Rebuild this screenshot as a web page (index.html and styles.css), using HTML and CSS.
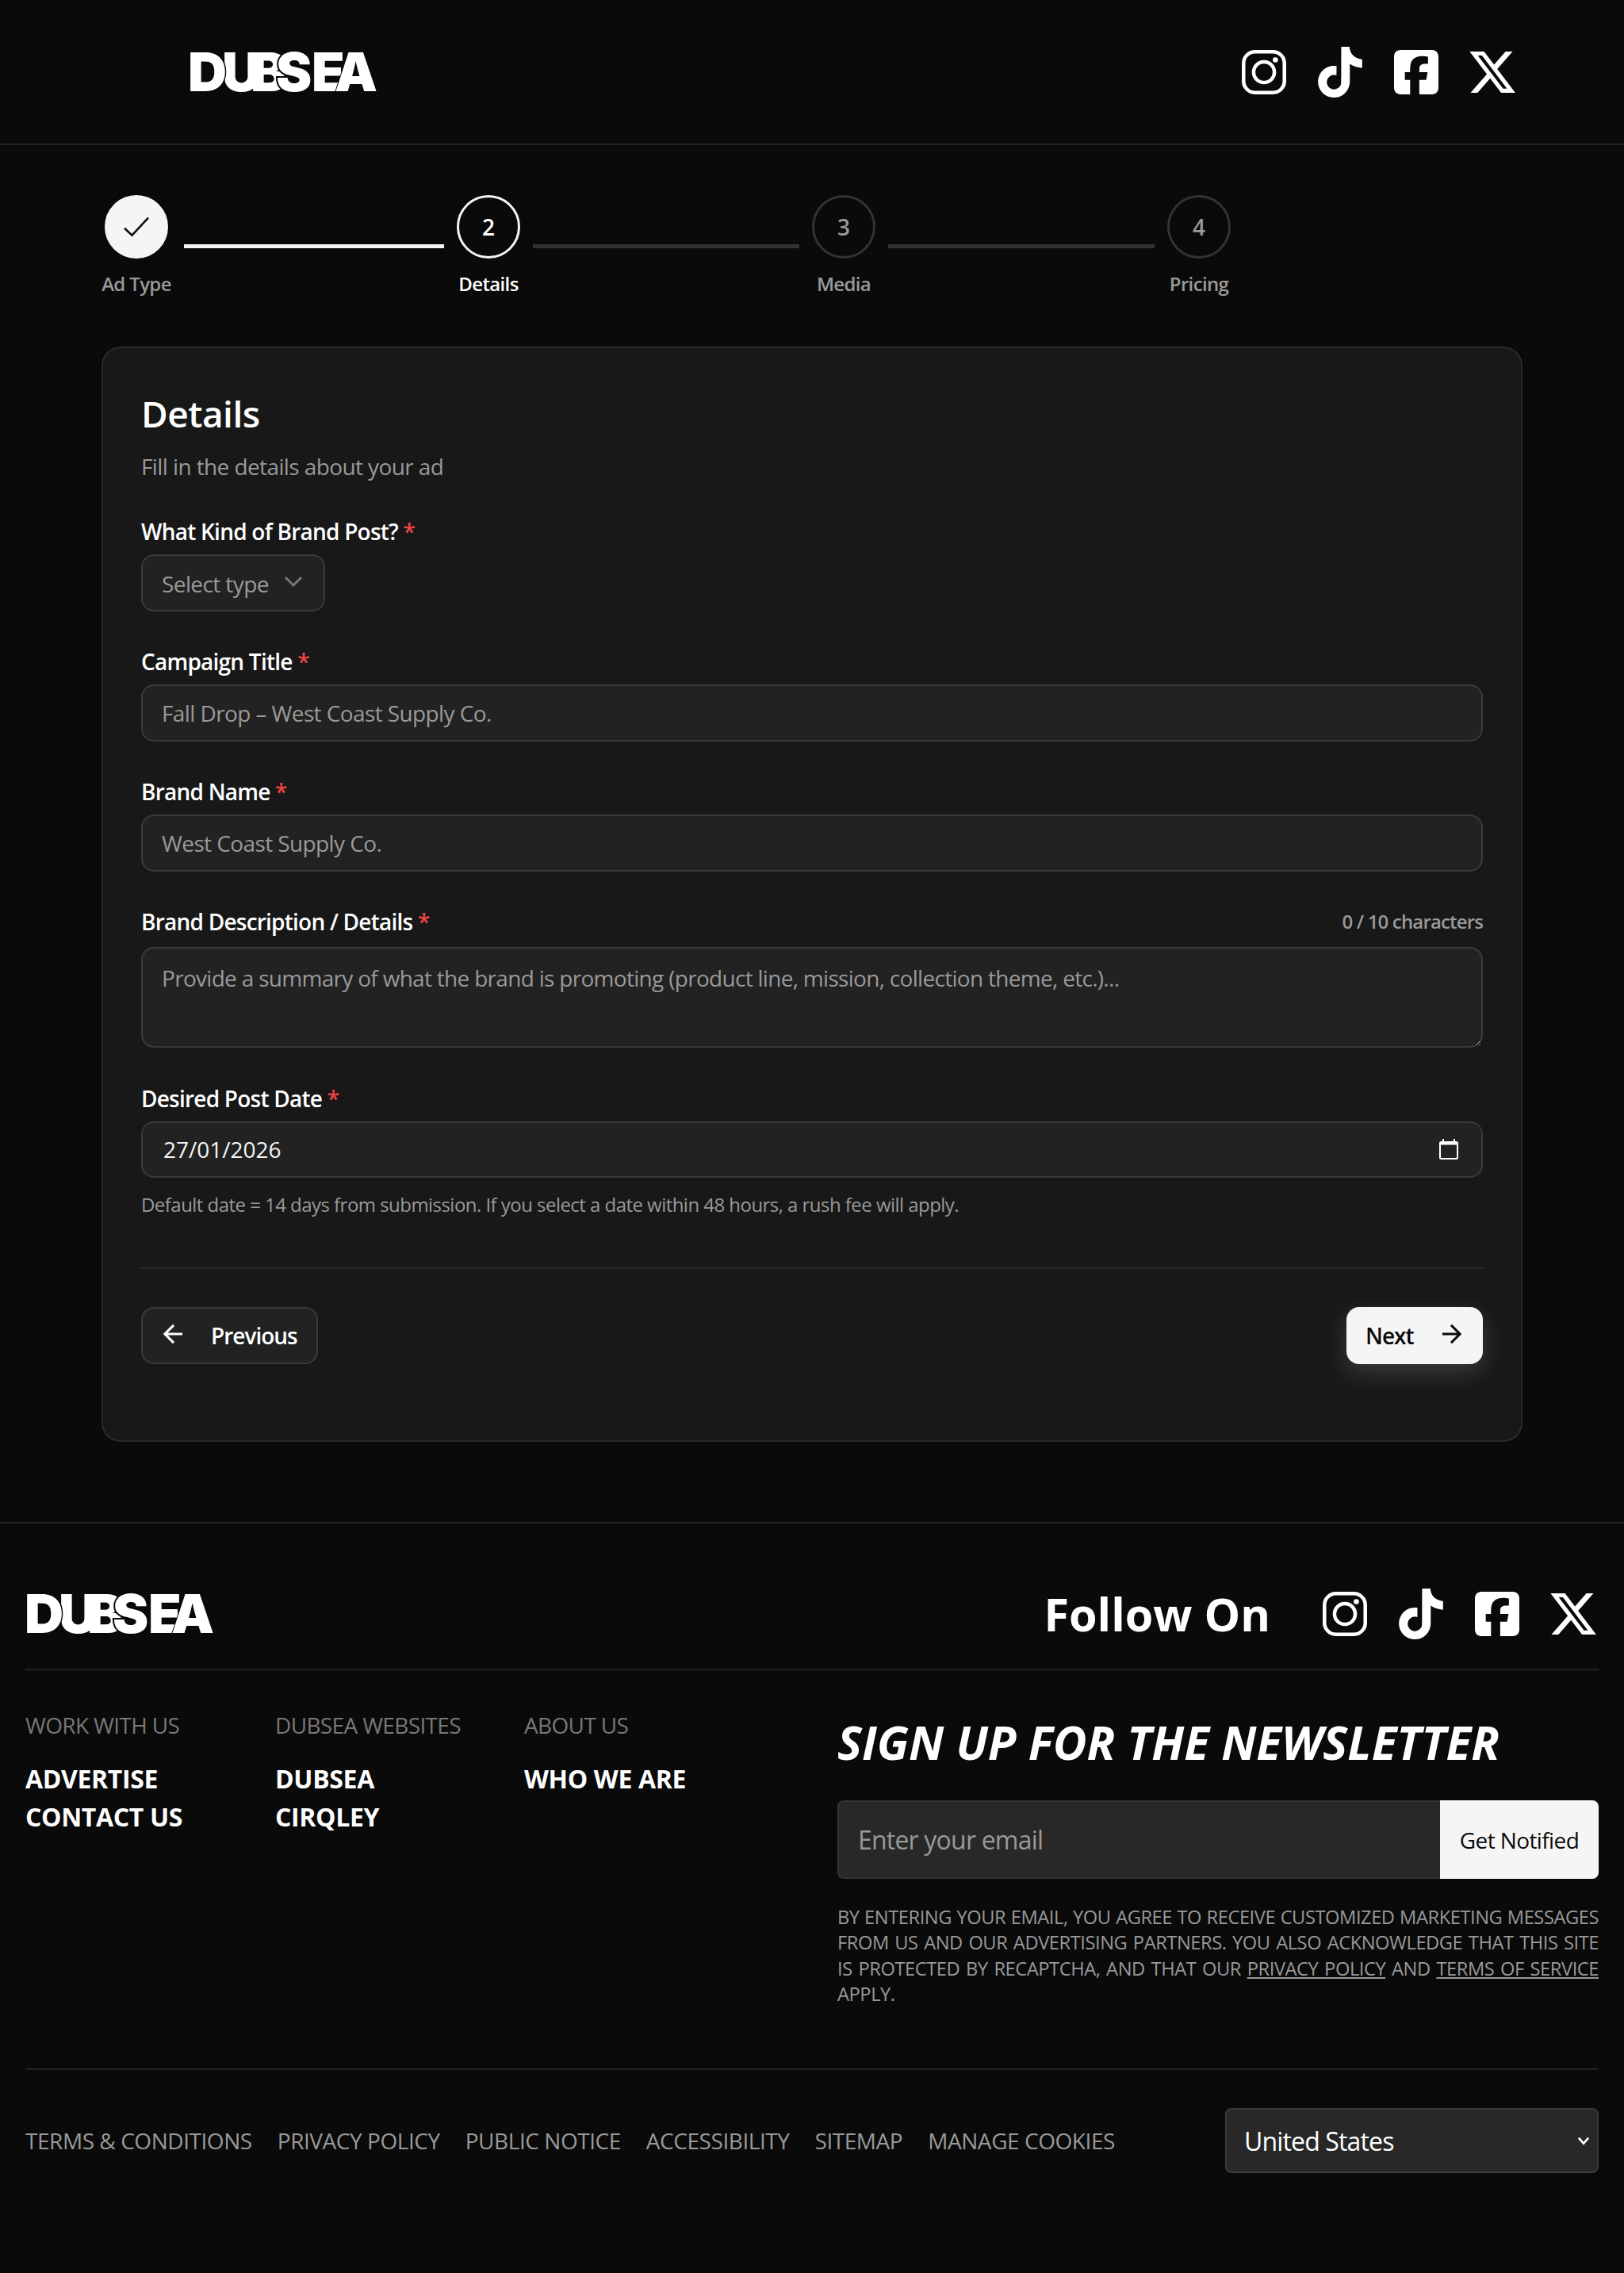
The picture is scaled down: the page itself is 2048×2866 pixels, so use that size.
FILE: index.html
```html
<!DOCTYPE html>
<html lang="en">
<head>
<meta charset="utf-8">
<title>DUBSEA – Details</title>
<link rel="stylesheet" href="styles.css">
</head>
<body>
<svg class="sprite" width="0" height="0" aria-hidden="true">
  <symbol id="i-ig" viewBox="0 0 24 24"><rect x="2.35" y="2.35" width="19.3" height="19.3" rx="5.4" fill="none" stroke="currentColor" stroke-width="1.7"/><circle cx="12" cy="12" r="4.9" fill="none" stroke="currentColor" stroke-width="1.7"/><circle cx="17.4" cy="6.2" r="1.25" fill="currentColor"/></symbol>
  <symbol id="i-tt" viewBox="0 0 24 24"><path fill="currentColor" d="M12.525.02c1.31-.02 2.61-.01 3.91-.02.08 1.53.63 3.09 1.75 4.17 1.12 1.11 2.7 1.62 4.24 1.79v4.03c-1.44-.05-2.89-.35-4.2-.97-.57-.26-1.1-.59-1.62-.93-.01 2.92.01 5.84-.02 8.75-.08 1.4-.54 2.79-1.35 3.94-1.31 1.92-3.58 3.17-5.91 3.21-1.43.08-2.86-.31-4.08-1.03-2.02-1.19-3.44-3.37-3.65-5.71-.02-.5-.03-1-.01-1.49.18-1.9 1.12-3.72 2.58-4.96 1.66-1.44 3.98-2.13 6.15-1.72.02 1.48-.04 2.96-.04 4.44-.99-.32-2.15-.23-3.02.37-.63.41-1.11 1.04-1.36 1.75-.21.51-.15 1.07-.14 1.61.24 1.64 1.82 3.02 3.5 2.87 1.12-.01 2.19-.66 2.77-1.61.19-.33.4-.67.41-1.06.1-1.79.06-3.57.07-5.36.01-4.03-.01-8.05.02-12.07z"/></symbol>
  <symbol id="i-fb" viewBox="-32 0 512 512"><path fill="currentColor" d="M64 32C28.7 32 0 60.7 0 96V416c0 35.3 28.7 64 64 64h98.2V334.2H109.4V256h52.8V222.3c0-87.1 39.4-127.5 125-127.5c16.2 0 44.2 3.2 55.7 6.4V172c-6-.6-16.5-1-29.6-1c-42 0-58.2 15.9-58.2 57.2V256h83.6l-14.4 78.2H255V480H384c35.3 0 64-28.7 64-64V96c0-35.3-28.7-64-64-64H64z"/></symbol>
  <symbol id="i-x" viewBox="0 0 24 24"><path fill="currentColor" d="M18.244 2.25h3.308l-7.227 8.26 8.502 11.24H16.17l-5.214-6.817L4.99 21.75H1.68l7.73-8.835L1.254 2.25H8.08l4.713 6.231zm-1.161 17.52h1.833L7.084 4.126H5.117z"/></symbol>
</svg>

<header class="site-header">
  <a class="logo" href="#" aria-label="DUBSEA"><span class="l-d">D</span><span class="l-u">U</span><span class="l-b">B</span><span class="l-s">S</span><span class="l-e">E</span><span class="l-a">A</span></a>
  <nav class="socials">
    <svg class="social"><use href="#i-ig"/></svg>
    <svg class="social"><use href="#i-tt"/></svg>
    <svg class="social"><use href="#i-fb"/></svg>
    <svg class="social"><use href="#i-x"/></svg>
  </nav>
</header>

<main class="page">
  <ol class="stepper">
    <li class="step done">
      <span class="dot"><svg class="check" viewBox="0 0 24 24"><path d="M3 13l5.7 5.4L21 5.2"/></svg></span>
      <span class="step-label">Ad Type</span>
    </li>
    <li class="connector first on"></li>
    <li class="step current">
      <span class="dot">2</span>
      <span class="step-label">Details</span>
    </li>
    <li class="connector"></li>
    <li class="step">
      <span class="dot">3</span>
      <span class="step-label">Media</span>
    </li>
    <li class="connector"></li>
    <li class="step">
      <span class="dot">4</span>
      <span class="step-label">Pricing</span>
    </li>
  </ol>

  <section class="card">
    <h1 class="card-title">Details</h1>
    <p class="card-sub">Fill in the details about your ad</p>

    <div class="field">
      <label class="label">What Kind of Brand Post? <em>*</em></label>
      <button class="type-select" type="button"><span>Select type</span><svg class="chev" viewBox="0 0 24 24"><path d="M6 9l6 6 6-6"/></svg></button>
    </div>
    <div class="field">
      <label class="label">Campaign Title <em>*</em></label>
      <input class="control" type="text" placeholder="Fall Drop – West Coast Supply Co.">
    </div>
    <div class="field">
      <label class="label">Brand Name <em>*</em></label>
      <input class="control" type="text" placeholder="West Coast Supply Co.">
    </div>
    <div class="field">
      <div class="label-row">
        <label class="label">Brand Description / Details <em>*</em></label>
        <span class="counter">0 / 10 characters</span>
      </div>
      <textarea class="control area" placeholder="Provide a summary of what the brand is promoting (product line, mission, collection theme, etc.)..."></textarea>
    </div>
    <div class="field last">
      <label class="label">Desired Post Date <em>*</em></label>
      <div class="control date">
        <input class="date-input" type="text" value="27/01/2026">
        <svg class="cal" viewBox="0 0 24 26"><rect x="1" y="4" width="22" height="21" rx="1.5"/><path class="cal-top" d="M1 6h22"/><path d="M5 0v4M19 0v4"/></svg>
      </div>
      <p class="help">Default date = 14 days from submission. If you select a date within 48 hours, a rush fee will apply.</p>
    </div>

    <div class="actions">
      <button class="btn ghost" type="button"><svg class="arrow" viewBox="0 0 24 24"><path d="M19 12H5M12 19l-7-7 7-7"/></svg>Previous</button>
      <button class="btn solid" type="button">Next<svg class="arrow" viewBox="0 0 24 24"><path d="M5 12h14M12 5l7 7-7 7"/></svg></button>
    </div>
  </section>
</main>

<footer class="site-footer">
  <div class="foot-top">
    <a class="logo small" href="#" aria-label="DUBSEA"><span class="l-d">D</span><span class="l-u">U</span><span class="l-b">B</span><span class="l-s">S</span><span class="l-e">E</span><span class="l-a">A</span></a>
    <div class="follow">
      <span class="follow-text">Follow On</span>
      <nav class="socials">
        <svg class="social"><use href="#i-ig"/></svg>
        <svg class="social"><use href="#i-tt"/></svg>
        <svg class="social"><use href="#i-fb"/></svg>
        <svg class="social"><use href="#i-x"/></svg>
      </nav>
    </div>
  </div>

  <div class="foot-mid">
    <div class="foot-cols">
      <div class="foot-col c1">
        <h3>WORK WITH US</h3>
        <a href="#">ADVERTISE</a>
        <a href="#">CONTACT US</a>
      </div>
      <div class="foot-col c2">
        <h3>DUBSEA WEBSITES</h3>
        <a href="#">DUBSEA</a>
        <a href="#">CIRQLEY</a>
      </div>
      <div class="foot-col">
        <h3>ABOUT US</h3>
        <a href="#">WHO WE ARE</a>
      </div>
    </div>
    <div class="news">
      <h2>SIGN UP FOR THE NEWSLETTER</h2>
      <form class="news-form">
        <input type="email" placeholder="Enter your email">
        <button type="button">Get Notified</button>
      </form>
      <p class="legal">BY ENTERING YOUR EMAIL, YOU AGREE TO RECEIVE CUSTOMIZED MARKETING MESSAGES FROM US AND OUR ADVERTISING PARTNERS. YOU ALSO ACKNOWLEDGE THAT THIS SITE IS PROTECTED BY RECAPTCHA, AND THAT OUR <a href="#">PRIVACY POLICY</a> AND <a href="#">TERMS OF SERVICE</a> APPLY.</p>
    </div>
  </div>

  <div class="foot-bottom">
    <nav class="foot-links">
      <a href="#">TERMS &amp; CONDITIONS</a>
      <a href="#">PRIVACY POLICY</a>
      <a href="#">PUBLIC NOTICE</a>
      <a href="#">ACCESSIBILITY</a>
      <a href="#">SITEMAP</a>
      <a href="#">MANAGE COOKIES</a>
    </nav>
    <div class="country-wrap">
      <select class="country"><option>United States</option></select>
      <svg class="country-chev" viewBox="0 0 14 10"><path d="M1.5 1.5L7 8l5.5-6.5"/></svg>
    </div>
  </div>
</footer>
</body>
</html>
```
FILE: styles.css
```css
* { box-sizing: border-box; }
html { color-scheme: dark; }
body {
  margin: 0;
  height: 2866px;
  background: #0a0a0a;
  color: #f5f5f5;
  font-family: "Open Sans", "Noto Sans", sans-serif;
  font-size: 28px;
  letter-spacing: -0.6px;
  overflow: hidden;
}
a { color: inherit; text-decoration: none; }
button, input, textarea, select { font: inherit; letter-spacing: inherit; }
.sprite { position: absolute; }

/* logo */
.logo {
  display: flex;
  height: 51px;
  margin-left: -3px;
  font-family: "Inter", "Liberation Sans", sans-serif;
  font-weight: 900;
  font-size: 68px;
  line-height: 51px;
  letter-spacing: 0;
  color: #fff;
}
.logo span { position: relative; flex: none; paint-order: stroke fill; white-space: nowrap; }
.logo .l-d { width: 43px; z-index: 2; -webkit-text-stroke: 3px #0a0a0a; }
.logo .l-u { width: 36px; z-index: 1; }
.logo .l-b { width: 32px; z-index: 1; }
.logo .l-s { width: 45px; z-index: 3; -webkit-text-stroke: 4px #0a0a0a; }
.logo .l-e { width: 29px; z-index: 1; }
.logo .l-a { width: 50px; z-index: 2; -webkit-text-stroke: 2px #0a0a0a; }

/* header */
.site-header {
  height: 183px;
  border-bottom: 2px solid #222;
  padding: 0 134px 0 240px;
  display: flex;
  align-items: center;
  justify-content: space-between;
}
.socials { display: flex; gap: 32px; }
.social { width: 64px; height: 64px; color: #fff; display: block; }

/* stepper */
.page { padding: 63px 128px 0; }
.stepper {
  list-style: none;
  margin: 0 0 63px;
  padding: 0;
  display: flex;
  align-items: center;
  height: 128px;
}
.step {
  display: flex;
  flex-direction: column;
  align-items: center;
  flex: none;
  min-width: 80px;
}
.step.done { width: 88px; }
.dot {
  width: 80px;
  height: 80px;
  border-radius: 50%;
  border: 3px solid #333;
  display: flex;
  align-items: center;
  justify-content: center;
  font-size: 28px;
  font-weight: 600;
  letter-spacing: 0;
  color: #999;
}
.done .dot { background: #f5f5f5; border-color: #f5f5f5; }
.current .dot { border-color: #f5f5f5; color: #fff; }
.check { width: 40px; height: 40px; fill: none; stroke: #111; stroke-width: 1.6; }
.step-label { margin-top: 16px; font-size: 24px; line-height: 32px; font-weight: 600; letter-spacing: -0.65px; color: #999; }
.current .step-label { color: #fff; }
.connector { flex: none; width: 336px; height: 5px; margin: 0 16px; background: #333; }
.connector.first { width: 328px; }
.connector.on { background: #f5f5f5; }

/* card */
.card {
  background: #181818;
  border: 2px solid #2a2a2a;
  border-radius: 24px;
  padding: 50px 48px 96px;
  height: 1381px;
}
.card-title { margin: 0; font-size: 46px; line-height: 64px; font-weight: 600; letter-spacing: -0.5px; color: #fff; }
.card-sub { margin: 16px 0 0; line-height: 38px; color: #999; }
.field { margin-top: 42.4px; }
.card-sub + .field { margin-top: 42px; }
.label { display: block; height: 42px; line-height: 42px; margin-bottom: 8px; font-weight: 600; letter-spacing: -0.77px; color: #fff; }
.label em { font-style: normal; color: #ef4444; }
.label-row { display: flex; justify-content: space-between; align-items: flex-start; margin-top: 3.6px; margin-bottom: 3px; }
.counter { font-size: 24px; line-height: 42px; font-weight: 600; letter-spacing: -0.85px; color: #999; }
.control {
  display: block;
  width: 100%;
  height: 71.5px;
  padding: 0 24px;
  background: #222;
  border: 2px solid #3a3a3a;
  border-radius: 16px;
  color: #f5f5f5;
  outline: none;
}
.control::placeholder, .news-form input::placeholder { color: #999; opacity: 1; }
.area { height: 127px; padding-top: 18px; line-height: 38px; letter-spacing: -0.7px; resize: vertical; }
.type-select {
  display: flex;
  align-items: center;
  width: 232px;
  height: 72px;
  padding: 2px 0 0 24px;
  background: #222;
  border: 2px solid #3a3a3a;
  border-radius: 16px;
  color: #999;
  white-space: nowrap;
}
.chev { width: 40px; height: 40px; margin: -6px 0 0 11px; fill: none; stroke: #777; stroke-width: 1.7; }
.date { display: flex; align-items: center; justify-content: space-between; padding: 0 29px 0 26px; margin-top: 0.4px; }
.date-input { flex: 1; background: none; border: 0; outline: 0; padding: 0; color: #f5f5f5; letter-spacing: 0; }
.cal { width: 24px; height: 26px; fill: none; stroke: #fff; stroke-width: 2; }
.cal-top { stroke-width: 3; }
.help { margin: 18px 0 0; font-size: 24px; line-height: 32px; letter-spacing: -0.54px; color: #999; }
.actions {
  margin-top: 63px;
  padding-top: 48px;
  border-top: 2px solid #2a2a2a;
  display: flex;
  justify-content: space-between;
}
.btn {
  display: flex;
  align-items: center;
  height: 71.5px;
  border-radius: 16px;
  font-weight: 600;
  letter-spacing: -1px;
  gap: 28px;
}
.ghost { width: 223px; padding: 0 0 0 20px; background: #222; border: 2px solid #3a3a3a; color: #fff; }
.solid { width: 172px; padding: 0 0 0 24px; background: #f5f5f5; border: 0; color: #0a0a0a; box-shadow: 0 10px 30px rgba(255,255,255,.16); }
.arrow { width: 38px; height: 38px; margin-top: -3px; fill: none; stroke: currentColor; stroke-width: 1.9; }

/* footer */
.site-footer { margin-top: 101px; border-top: 2px solid #222; padding: 0 32px; }
.foot-top {
  height: 185px;
  padding: 44px 0 0 2px;
  border-bottom: 2px solid #222;
  display: flex;
  align-items: center;
  justify-content: space-between;
}
.follow { display: flex; align-items: center; gap: 62px; }
.follow-text { font-size: 57.5px; font-weight: 700; letter-spacing: 0; color: #fff; }
.foot-mid { display: flex; justify-content: space-between; height: 504px; border-bottom: 2px solid #222; }
.foot-cols { display: flex; padding-top: 49px; }
.foot-col { display: flex; flex-direction: column; }
.foot-col.c1 { width: 315px; }
.foot-col.c2 { width: 314px; }
.foot-col h3 { margin: 0 0 24px; font-size: 28px; line-height: 40px; font-weight: 400; letter-spacing: -0.65px; color: #777; }
.foot-col a { font-size: 32px; line-height: 48px; font-weight: 700; letter-spacing: -0.35px; color: #fff; }
.news { width: 960px; padding-top: 48px; }
.news h2 { margin: 0; font-size: 58.5px; line-height: 84px; font-weight: 700; font-style: italic; letter-spacing: 0; color: #fff; }
.news-form { display: flex; height: 99px; margin-top: 32px; }
.news-form input {
  flex: 1;
  min-width: 0;
  padding: 0 24px;
  font-size: 32px;
  letter-spacing: -0.8px;
  background: #282828;
  border: 2px solid #333;
  border-right: 0;
  border-radius: 8px 0 0 8px;
  color: #f5f5f5;
  outline: none;
}
.news-form button {
  width: 200px;
  background: #f5f5f5;
  color: #0a0a0a;
  border: 0;
  border-radius: 0 8px 8px 0;
}
.legal { margin: 32px 0 0; font-size: 23.7px; line-height: 32.3px; letter-spacing: -0.45px; color: #999; text-align: justify; }
.legal a { text-decoration: underline; }
.foot-bottom { display: flex; align-items: center; justify-content: space-between; padding-top: 48px; }
.foot-links { display: flex; gap: 32px; letter-spacing: -0.45px; color: #999; }
.country-wrap { position: relative; width: 471px; height: 82px; }
.country {
  display: block;
  appearance: none;
  width: 100%;
  height: 100%;
  padding: 0 40px 0 22px;
  font-size: 32px;
  letter-spacing: -0.85px;
  background: #282828;
  border: 2px solid #3a3a3a;
  border-radius: 8px;
  color: #fff;
}
.country-chev { position: absolute; right: 11px; top: 36px; width: 16px; height: 11px; fill: none; stroke: #fff; stroke-width: 2.4; pointer-events: none; }
```
